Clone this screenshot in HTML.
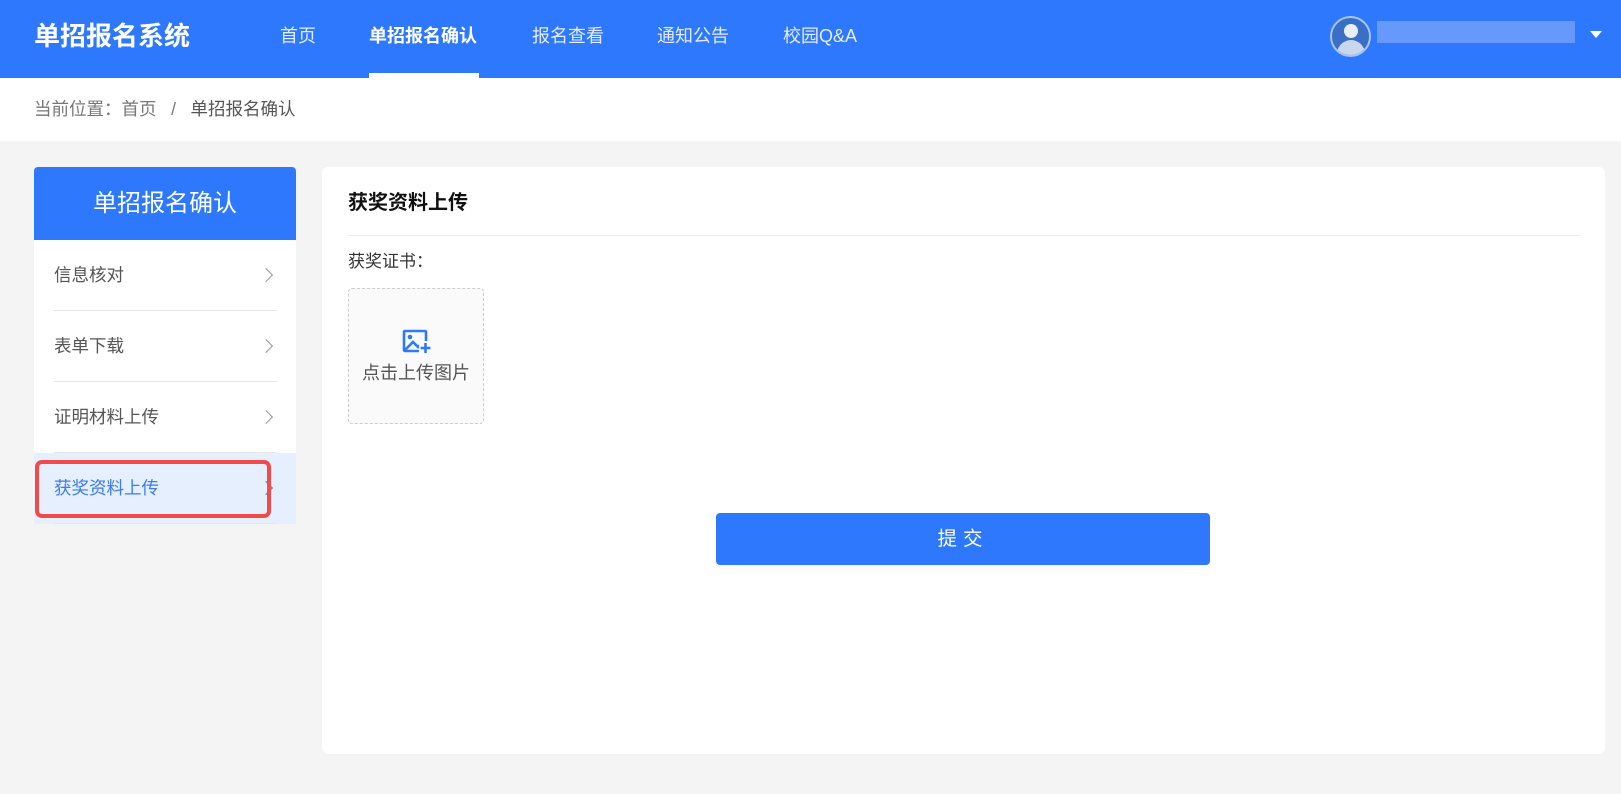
<!DOCTYPE html>
<html><head><meta charset="utf-8"><style>
*{margin:0;padding:0;box-sizing:border-box}
body{width:1621px;height:794px;background:#f4f4f4;font-family:"Liberation Sans","Noto Sans CJK SC",sans-serif;position:relative;overflow:hidden}
.hd{position:absolute;left:0;top:0;width:1621px;height:78px;background:#2d78fd;color:#fff}
.abs{position:absolute;white-space:nowrap}
.nav{font-size:18px;top:23px;line-height:26px;color:#e4ecff}
.bc{position:absolute;left:0;top:78px;width:1621px;height:63px;background:#fff}
.side{position:absolute;left:34px;top:167px;width:262px}
.sh{height:73px;background:#2d78fd;color:#fff;font-size:24px;text-align:center;line-height:73px;border-radius:4px 4px 0 0}
.it{height:71px;background:#fff;position:relative;font-size:17.5px;color:#555;line-height:71px;padding-left:20px}
.it:after{content:"";position:absolute;left:20px;right:19px;bottom:0;height:1px;background:#e6e6e6}
.it .ch{position:absolute;left:227px;top:30px;width:10px;height:10px;border-top:1.5px solid #999;border-right:1.5px solid #999;transform:rotate(45deg)}
.card{position:absolute;left:322px;top:167px;width:1283px;height:587px;background:#fff;border-radius:6px}
</style></head><body>
<div class="hd">
<div class="abs" style="left:34px;top:18px;font-size:26px;font-weight:bold;line-height:36px">单招报名系统</div>
<div class="abs nav" style="left:280px">首页</div>
<div class="abs nav" style="left:369px;color:#fff;font-weight:bold">单招报名确认</div>
<div class="abs" style="left:369px;top:73px;width:110px;height:5px;background:#fff"></div>
<div class="abs nav" style="left:532px">报名查看</div>
<div class="abs nav" style="left:657px">通知公告</div>
<div class="abs nav" style="left:783px">校园Q&amp;A</div>
<div class="abs" style="left:1330px;top:16px;width:41px;height:41px;border-radius:50%;background:#3a6fc8;border:2px solid #a9c4f2;overflow:hidden">
<div style="position:absolute;left:12px;top:6px;width:14px;height:14px;border-radius:50%;background:#e8eef8"></div>
<div style="position:absolute;left:5px;top:22px;width:28px;height:20px;border-radius:14px 14px 0 0;background:#c9d6ec"></div></div>
<div class="abs" style="left:1377px;top:21px;width:198px;height:22px;background:#6e9cfd;opacity:.9"></div>
<div class="abs" style="left:1590px;top:31px;width:0;height:0;border-left:6px solid transparent;border-right:6px solid transparent;border-top:7px solid #fff"></div>
</div>
<div class="bc"><div class="abs" style="left:34px;top:18px;font-size:17.5px;line-height:26px;color:#777">当前位置：首页&nbsp;&nbsp;&nbsp;/&nbsp;&nbsp;&nbsp;<span style="color:#555">单招报名确认</span></div></div>
<div class="side">
<div class="sh">单招报名确认</div>
<div class="it">信息核对<span class="ch"></span></div>
<div class="it">表单下载<span class="ch"></span></div>
<div class="it">证明材料上传<span class="ch"></span></div>
<div class="it" style="background:#e6effd;color:#3a7bf0">获奖资料上传<span class="ch" style="border-color:#3a7bf0"></span></div>
</div>
<div class="abs" style="left:35px;top:460px;width:236px;height:58px;border:4px solid #f04a4a;border-radius:7px"></div>
<div class="card">
<div class="abs" style="left:26px;top:22px;font-size:20px;font-weight:bold;color:#111;line-height:28px">获奖资料上传</div>
<div class="abs" style="left:26px;top:68px;width:1232px;height:1px;background:#eee"></div>
<div class="abs" style="left:26px;top:83px;font-size:17px;color:#333;line-height:24px">获奖证书：</div>
<div class="abs" style="left:26px;top:121px;width:136px;height:136px;border:1px dashed #ccc;border-radius:4px;background:#fafafa">
<svg style="position:absolute;left:53px;top:40px" width="30" height="26" viewBox="0 0 30 26"><rect x="2" y="2" width="22" height="20" rx="1" fill="none" stroke="#2d78fd" stroke-width="2.6"/><circle cx="8" cy="8" r="2.3" fill="#2d78fd"/><path d="M3 21l8-8 5 5 3-3" fill="none" stroke="#2d78fd" stroke-width="2.6"/><rect x="17" y="12" width="13" height="13" fill="#fafafa"/><path d="M23.5 14v10M18.5 19h10" stroke="#2d78fd" stroke-width="2.6"/></svg>
<div class="abs" style="left:0;width:134px;text-align:center;top:72px;font-size:18px;color:#555;line-height:24px">点击上传图片</div>
</div>
<div class="abs" style="left:394px;top:346px;width:494px;height:52px;background:#2d78fd;border-radius:4px;color:#fff;font-size:19.5px;text-align:center;line-height:52px;letter-spacing:6px">提交</div>
</div>
</body></html>
